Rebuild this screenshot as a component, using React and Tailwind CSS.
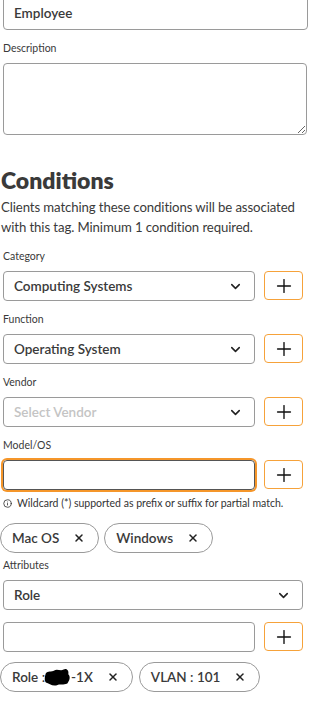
import React from 'react';
import { ChevronDown, Plus, X, Info } from 'lucide-react';

const Label = ({ children, className = '' }) => (
  <div className={`mx-[3px] text-[10.5px] leading-[16px] text-[#3a3a3a] font-['Lato'] ${className}`}>{children}</div>
);

const SelectBox = ({ value, placeholder, className = '' }) => (
  <div className={`h-[30px] flex items-center justify-between border border-[#9a9a9a] rounded-[4px] bg-white pl-[10px] pr-[11px] ${className}`}>
    <span className={`text-[13.5px] font-semibold ${value ? 'text-[#3a3a3a]' : 'text-[#c4c4c4]'}`}>
      {value || placeholder}
    </span>
    <ChevronDown size={15} strokeWidth={2.5} className="text-[#222]" />
  </div>
);

const AddButton = () => (
  <button className="w-[39px] h-[29px] shrink-0 flex items-center justify-center border border-[#f6a23a] rounded-[4px] bg-white">
    <Plus size={22} strokeWidth={1.5} className="text-[#111]" />
  </button>
);

const Chip = ({ children }) => (
  <div className="h-[30px] flex items-center border border-[#9a9a9a] rounded-full pl-[11px] pr-[13px] gap-[14px]">
    <span className="text-[13.5px] font-semibold text-[#3a3a3a] flex items-center">{children}</span>
    <X size={12} strokeWidth={3} className="text-[#222]" />
  </div>
);

const FieldRow = ({ children }) => (
  <div className="mx-[3px] w-[300px] flex gap-[9px]">{children}</div>
);

export default function App() {
  return (
    <div className="w-[311px] h-[701px] overflow-hidden bg-white font-['Lato',sans-serif] text-[#3a3a3a]">
      <div className="mx-[3px] -mt-[4px] h-[34px] border border-[#9a9a9a] rounded-[4px] flex items-center pl-[10px] pt-[1px]">
        <span className="text-[13.5px] font-semibold">Employee</span>
      </div>

      <Label className="mt-[10px]">Description</Label>
      <textarea className="block mt-[7px] mx-[3px] w-[304px] h-[72px] border border-[#9a9a9a] rounded-[4px] resize-y" />

      <h2 className="mt-[31px] ml-[1px] text-[23px] leading-[28px] font-extrabold text-[#3a3a3a]">Conditions</h2>
      <p className="mt-[3px] ml-[1px] text-[13.2px] leading-[20px] tracking-[-0.1px] text-[#3a3a3a]">
        Clients matching these conditions will be associated with this tag. Minimum 1 condition required.
      </p>

      <Label className="mt-[11px]">Category</Label>
      <div className="mt-[7px]">
        <FieldRow>
          <SelectBox value="Computing Systems" className="flex-1" />
          <AddButton />
        </FieldRow>
      </div>

      <Label className="mt-[10px]">Function</Label>
      <div className="mt-[7px]">
        <FieldRow>
          <SelectBox value="Operating System" className="flex-1" />
          <AddButton />
        </FieldRow>
      </div>

      <Label className="mt-[10px]">Vendor</Label>
      <div className="mt-[7px]">
        <FieldRow>
          <SelectBox placeholder="Select Vendor" className="flex-1" />
          <AddButton />
        </FieldRow>
      </div>

      <Label className="mt-[10px]">Model/OS</Label>
      <div className="mt-[7px]">
        <FieldRow>
          <div className="flex-1 h-[30px] border border-[#555] rounded-[4px] ring-2 ring-[#f5962a]" />
          <AddButton />
        </FieldRow>
      </div>

      <div className="mt-[7px] mx-[3px] flex items-center gap-[5px] text-[10.5px] leading-[12px] text-[#333]">
        <Info size={9} strokeWidth={2.2} />
        <span>Wildcard (*) supported as prefix or suffix for partial match.</span>
      </div>

      <div className="mt-[14px] flex gap-[5px]">
        <Chip>Mac OS</Chip>
        <Chip>Windows</Chip>
      </div>

      <Label className="mt-[4px]">Attributes</Label>
      <div className="mt-[7px] mx-[3px] w-[300px]">
        <SelectBox value="Role" />
      </div>

      <div className="mt-[12px]">
        <FieldRow>
          <div className="flex-1 h-[30px] border border-[#9a9a9a] rounded-[4px]" />
          <AddButton />
        </FieldRow>
      </div>

      <div className="mt-[10px] flex gap-[6px]">
        <Chip>
          Role :
          <svg width="28" height="20" viewBox="0 0 30 20" className="-ml-[1px] -mr-[1px]">
            <path d="M2 6 C4 3 8 5 11 3 C14 1 18 4 21 2 C24 0 27 3 26 7 C29 10 27 14 25 17 C21 19 17 17 13 19 C9 20 5 17 2 16 C0 13 1 9 2 6 Z" fill="#000" />
          </svg>
          -1X
        </Chip>
        <Chip>VLAN : 101</Chip>
      </div>
    </div>
  );
}
